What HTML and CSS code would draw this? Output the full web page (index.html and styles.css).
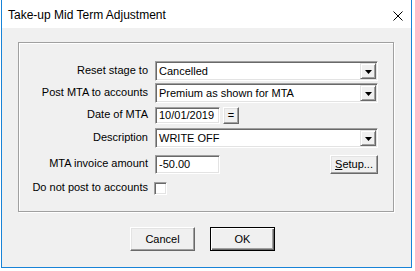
FILE: index.html
```html
<!DOCTYPE html>
<html lang="en">
<head>
  <meta charset="UTF-8">
  <title>Take-up Mid Term Adjustment</title>
  <link rel="stylesheet" href="styles.css">
</head>
<body>

<div class="window">
  <div class="titlebar">
    <span class="title">Take-up Mid Term Adjustment</span>
    <svg class="close" width="10" height="10" viewBox="0 0 10 10">
      <path d="M0.5 0.5 L9.5 9.5 M9.5 0.5 L0.5 9.5" stroke="#000" stroke-width="1" fill="none"/>
    </svg>
  </div>

  <div class="client">
    <div class="group">
      <div class="row r1">
        <span class="lbl">Reset stage to</span>
        <div class="combo">
          <span class="val">Cancelled</span>
          <span class="drop"><svg width="7" height="4" viewBox="0 0 7 4"><path d="M0 0 H7 L3.5 4 Z" fill="#000"/></svg></span>
        </div>
      </div>
      <div class="row r2">
        <span class="lbl">Post MTA to accounts</span>
        <div class="combo">
          <span class="val">Premium as shown for MTA</span>
          <span class="drop"><svg width="7" height="4" viewBox="0 0 7 4"><path d="M0 0 H7 L3.5 4 Z" fill="#000"/></svg></span>
        </div>
      </div>
      <div class="row r3">
        <span class="lbl">Date of MTA</span>
        <div class="edit date"><span class="val">10/01/2019</span></div>
        <span class="btn small">=</span>
      </div>
      <div class="row r4">
        <span class="lbl">Description</span>
        <div class="combo">
          <span class="val">WRITE OFF</span>
          <span class="drop"><svg width="7" height="4" viewBox="0 0 7 4"><path d="M0 0 H7 L3.5 4 Z" fill="#000"/></svg></span>
        </div>
      </div>
      <div class="row r5">
        <span class="lbl">MTA invoice amount</span>
        <div class="edit amount"><span class="val">-50.00</span></div>
        <span class="btn setup"><u>S</u>etup...</span>
      </div>
      <div class="row r6">
        <span class="lbl">Do not post to accounts</span>
        <span class="check"></span>
      </div>
    </div>

    <div class="buttons">
      <span class="btn push">Cancel</span>
      <span class="btn push default">OK</span>
    </div>
  </div>
</div>

</body>
</html>
```

FILE: styles.css
```css
html, body { margin: 0; padding: 0; background: #fff; }
body { width: 415px; height: 271px; padding-left: 1px; box-sizing: border-box; font-family: "Liberation Sans", Arial, sans-serif; font-size: 11px; color: #000; }

.window { width: 411px; height: 268px; box-sizing: border-box; border: 1px solid #1883d7; border-top: none; display: flex; flex-direction: column; }

.titlebar { height: 28px; background: #fff; display: flex; align-items: center; }
.title { font-size: 12px; padding-left: 6px; padding-top: 2px; flex: 1; }
.close { margin-right: 8px; margin-top: 3px; }

.client { flex: 1; background: #f0f0f0; padding: 14px 0 0 16px; }

.group { width: 376px; height: 170px; box-sizing: border-box; border: 1px solid #a0a0a0; box-shadow: 1px 1px 0 #fff, inset 1px 1px 0 #fff; padding-top: 18px; }

.row { display: flex; align-items: center; }
.r1, .r2, .r4 { height: 20px; }
.r2 { margin-top: 2px; }
.r3 { height: 17px; margin-top: 4px; }
.r4 { margin-top: 4px; }
.r5 { height: 19px; margin-top: 7px; width: 359px; }
.r6 { height: 13px; margin-top: 8px; }

.lbl { width: 129px; margin-right: 7px; text-align: right; white-space: nowrap; line-height: 13px; margin-top: -2px; }

.combo, .edit, .check { box-sizing: border-box; background: #fff; border: 1px solid; border-color: #a0a0a0 #fff #fff #a0a0a0; box-shadow: inset 1px 1px 0 #696969, inset -1px -1px 0 #e3e3e3; padding: 1px; display: flex; align-items: center; }
.combo { width: 223px; height: 20px; }
.val { flex: 1; padding-left: 2px; line-height: 13px; white-space: nowrap; }

.drop { width: 16px; height: 16px; box-sizing: border-box; background: #f0f0f0; border: 1px solid; border-color: #e3e3e3 #696969 #696969 #e3e3e3; box-shadow: inset 1px 1px 0 #fff, inset -1px -1px 0 #a0a0a0; display: flex; align-items: center; justify-content: center; }
.drop svg { display: block; margin-top: 1px; }

.edit { height: 100%; }
.date { width: 65px; }
.amount { width: 65px; }

.btn { box-sizing: border-box; background: #f0f0f0; border: 1px solid; border-color: #fff #696969 #696969 #fff; box-shadow: inset -1px -1px 0 #a0a0a0, inset 1px 1px 0 #e3e3e3; display: flex; align-items: center; justify-content: center; line-height: 13px; }
.small { width: 16px; height: 17px; margin-left: 3px; }
.setup { width: 48px; height: 19px; margin-left: auto; }

.check { width: 13px; height: 13px; margin-left: -1px; }

.buttons { display: flex; gap: 15px; margin-top: 15px; padding-left: 112px; }
.push { width: 65px; height: 24px; }
.default { border-color: #000; box-shadow: inset 1px 1px 0 #fff, inset -1px -1px 0 #696969, inset -2px -2px 0 #a0a0a0; }
```
